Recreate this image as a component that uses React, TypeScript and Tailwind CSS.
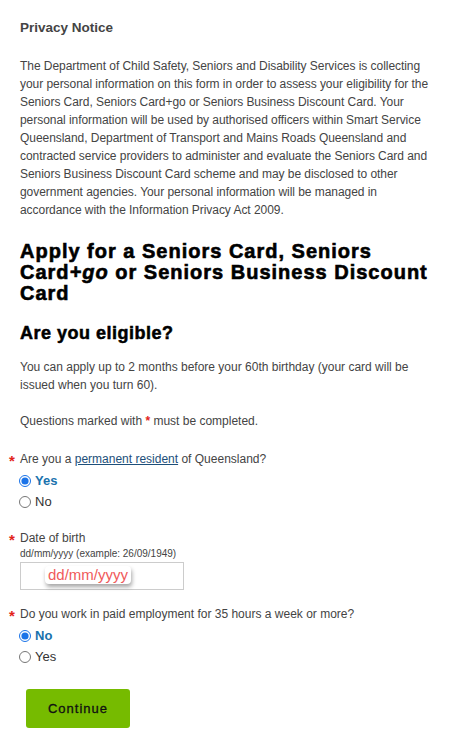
import React, { useState } from 'react';

const Star = () => (
  <span className="absolute left-[-11px] top-[3px] text-[#e2231a] text-[15px] leading-none font-bold">*</span>
);

const Radio: React.FC<{ label: string; checked: boolean; onChange: () => void }> = ({ label, checked, onChange }) => (
  <label className="flex items-center gap-[4px] h-[21px] ml-[-1px] cursor-pointer">
    <input type="radio" checked={checked} onChange={onChange} className="w-[12px] h-[12px] m-0 accent-[#1a73e8]" />
    <span className={checked ? 'font-bold text-[#1a72ad] text-[13px]' : 'text-[#333] text-[13px]'}>{label}</span>
  </label>
);

export default function App() {
  const [resident, setResident] = useState('yes');
  const [work, setWork] = useState('no');

  return (
    <div className="px-[20px] pt-[18px] pb-[10px] bg-white text-[#444] text-[12px] leading-[18px] font-['Liberation_Sans',Arial,sans-serif]">
      <h3 className="text-[13.5px] font-bold text-[#444] leading-[20px]">Privacy Notice</h3>
      <p className="mt-[19px] tracking-[-0.05px]">
        The Department of Child Safety, Seniors and Disability Services is collecting your personal information on this form in order to assess your eligibility for the Seniors Card, Seniors Card+go or Seniors Business Discount Card. Your personal information will be used by authorised officers within Smart Service Queensland, Department of Transport and Mains Roads Queensland and contracted service providers to administer and evaluate the Seniors Card and Seniors Business Discount Card scheme and may be disclosed to other government agencies. Your personal information will be managed in accordance with the Information Privacy Act 2009.
      </p>

      <h1 className="mt-[22px] text-[20px] leading-[21px] font-bold text-black tracking-[1px] [-webkit-text-stroke:0.6px_black]">
        Apply for a Seniors Card, Seniors Card<i>+go</i> or Seniors Business Discount Card
      </h1>

      <h2 className="mt-[18px] text-[18px] leading-[22px] font-bold text-black tracking-[0.5px] [-webkit-text-stroke:0.5px_black]">Are you eligible?</h2>

      <p className="mt-[14px]">You can apply up to 2 months before your 60th birthday (your card will be issued when you turn 60).</p>
      <p className="mt-[18px]">
        Questions marked with <span className="text-[#e2231a] font-bold">*</span> must be completed.
      </p>

      <div className="relative mt-[20px]">
        <Star />
        <p>
          Are you a <a href="#" className="text-[#1d4f7a] underline">permanent resident</a> of Queensland?
        </p>
        <div className="mt-[2px]">
          <Radio label="Yes" checked={resident === 'yes'} onChange={() => setResident('yes')} />
          <Radio label="No" checked={resident === 'no'} onChange={() => setResident('no')} />
        </div>
      </div>

      <div className="relative mt-[17px]">
        <Star />
        <p>Date of birth</p>
        <p className="text-[10px] leading-[14px]">dd/mm/yyyy (example: 26/09/1949)</p>
        <div className="relative mt-[1px] w-[164px] h-[28px] border border-[#ccc] bg-white">
          <span className="absolute left-[24px] top-[3px] bg-white px-[3px] rounded-[4px] shadow-[1px_3px_4px_rgba(0,0,0,0.35)] text-[#f05a5a] text-[15px] leading-[18px]">
            dd/mm/yyyy
          </span>
        </div>
      </div>

      <div className="relative mt-[15px]">
        <Star />
        <p>Do you work in paid employment for 35 hours a week or more?</p>
        <div className="mt-[2px]">
          <Radio label="No" checked={work === 'no'} onChange={() => setWork('no')} />
          <Radio label="Yes" checked={work === 'yes'} onChange={() => setWork('yes')} />
        </div>
      </div>

      <button className="mt-[22px] ml-[6px] w-[104px] h-[39px] rounded-[3px] bg-[#76bb00] text-[#111] text-[13px] tracking-[1px] [-webkit-text-stroke:0.3px_#111]">
        Continue
      </button>
    </div>
  );
}
